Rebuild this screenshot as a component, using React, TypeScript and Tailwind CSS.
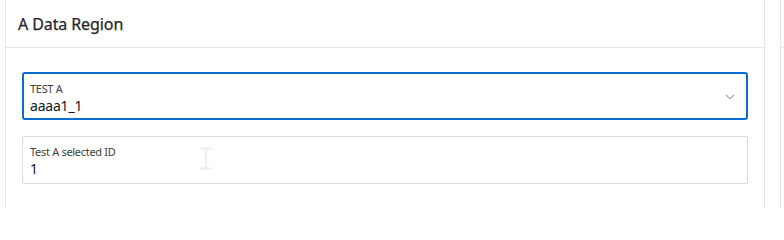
import React from "react";

export default function App() {
  const font = { fontFamily: '"Noto Sans", "Open Sans", sans-serif' };
  return (
    <div className="w-[784px] h-[208px] bg-white overflow-hidden flex" style={font}>
      <div className="w-[5px] shrink-0" />
      <div className="w-[760px] shrink-0 border-x border-[#e6e6e6] flex flex-col">
        <div className="h-[48px] border-b border-[#e6e6e6] flex items-center pl-[12px]">
          <h2 className="text-[16px] font-normal text-[#262626] leading-none tracking-[-0.1px] [-webkit-text-stroke:0.25px_#262626]">A Data Region</h2>
        </div>
        <div className="pl-[16px] pr-[16px] pt-[24px] flex flex-col gap-[16px]">
          <div className="h-[48px] border-2 border-[#0a6cd2] rounded-[3px] flex items-center pl-[6px] pr-[11px]">
            <div className="flex-1 self-stretch flex flex-col pt-[8px]">
              <span className="text-[11px] leading-[14px] text-[#404040] tracking-[-0.3px]">TEST A</span>
              <span className="text-[14px] leading-[18px] text-[#161513] mt-[1px] tracking-[-0.2px]">aaaa1_1</span>
            </div>
            <svg width="10" height="6" viewBox="0 0 10 6" className="mt-[1px]">
              <path d="M1 0.8 L5 4.8 L9 0.8" fill="none" stroke="#9a9a9a" strokeWidth="1.1" />
            </svg>
          </div>
          <div className="h-[48px] border border-[#dcdcdc] rounded-[2px] pl-[7px] pt-[8px] relative">
            <div className="flex flex-col">
              <span className="text-[11px] leading-[14px] text-[#404040] tracking-[-0.3px]">Test A selected ID</span>
              <span className="text-[14px] leading-[18px] text-[#161513] mt-[1px]">1</span>
            </div>
            <svg className="absolute left-[176px] top-[10px]" width="14" height="23" viewBox="0 0 14 23">
              <path d="M1 1.5 H13 M1 21.5 H13 M7 1.5 V21.5" fill="none" stroke="#eeeeee" strokeWidth="2" />
            </svg>
          </div>
        </div>
      </div>
      <div className="w-[15px] shrink-0" />
      <div className="flex-1 border-l border-[#e6e6e6] flex flex-col">
        <div className="h-[48px] border-b border-[#e6e6e6]" />
      </div>
    </div>
  );
}
